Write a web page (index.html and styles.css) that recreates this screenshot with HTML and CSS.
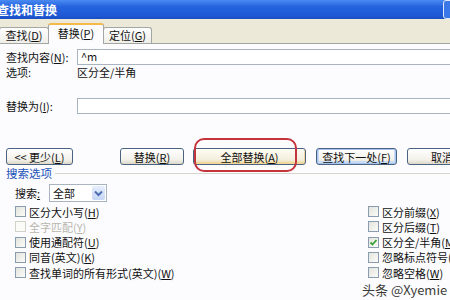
FILE: index.html
```html
<!DOCTYPE html>
<html lang="zh-CN">
<head>
  <meta charset="UTF-8">
  <meta name="viewport" content="width=device-width, initial-scale=1.0">
  <title>查找和替换</title>
  <link rel="stylesheet" href="styles.css">
</head>
<body>
  <div class="dialog">
    <div class="titlebar">
      <span class="title">查找和替换</span>
      <span class="tb-btn"></span>
    </div>

    <div class="tabs">
      <div class="tab first">查找(<u>D</u>)</div>
      <div class="tab active">替换(<u>P</u>)</div>
      <div class="tab">定位(<u>G</u>)</div>
    </div>

    <div class="panel">
      <div class="field">
        <span class="label">查找内容(<u>N</u>):</span>
        <div class="input">^m</div>
      </div>
      <div class="field option">
        <span class="label">选项:</span>
        <span>区分全/半角</span>
      </div>
      <div class="field replace">
        <span class="label">替换为(<u>I</u>):</span>
        <div class="input"></div>
      </div>

      <div class="actions">
        <button class="btn more">&lt;&lt; 更少(<u>L</u>)</button>
        <button class="btn one">替换(<u>R</u>)</button>
        <div class="all-wrap">
          <button class="btn all">全部替换(<u>A</u>)</button>
          <span class="mark"></span>
        </div>
        <button class="btn next">查找下一处(<u>F</u>)</button>
        <button class="btn cancel">取消</button>
      </div>

      <div class="group-title"><span>搜索选项</span></div>

      <div class="search-row">
        <span class="search-label">搜索<u>:</u></span>
        <div class="select">
          <span>全部</span>
          <span class="arrow">
            <svg width="9" height="7" viewBox="0 0 9 7"><path d="M1 1.5 L4.5 5 L8 1.5" fill="none" stroke="#4d6fb0" stroke-width="2"/></svg>
          </span>
        </div>
      </div>

      <div class="checks">
        <label class="check"><span class="box"></span>区分大小写(<u>H</u>)</label>
        <label class="check disabled"><span class="box"></span>全字匹配(<u>Y</u>)</label>
        <label class="check"><span class="box"></span>使用通配符(<u>U</u>)</label>
        <label class="check"><span class="box"></span>同音(英文)(<u>K</u>)</label>
        <label class="check"><span class="box"></span>查找单词的所有形式(英文)(<u>W</u>)</label>
        <label class="check"><span class="box"></span>区分前缀(<u>X</u>)</label>
        <label class="check"><span class="box"></span>区分后缀(<u>T</u>)</label>
        <label class="check"><span class="box checked">
          <svg width="9" height="9" viewBox="0 0 9 9"><path d="M1.5 4.5 L3.5 6.5 L7.5 2" fill="none" stroke="#3aa13a" stroke-width="1.8"/></svg>
        </span>区分全/半角(<u>M</u>)</label>
        <label class="check"><span class="box"></span>忽略标点符号(<u>S</u>)</label>
        <label class="check"><span class="box"></span>忽略空格(<u>W</u>)</label>
      </div>
    </div>

    <div class="watermark">头条 @Xyemie</div>
  </div>
</body>
</html>
```

FILE: styles.css
```css
body {
  margin: 0;
  width: 450px;
  height: 300px;
  overflow: hidden;
  font-family: "Noto Sans CJK SC", "Liberation Sans", sans-serif;
  font-size: 11px;
  color: #111;
}

u {
  text-decoration: underline;
}

.dialog {
  position: relative;
  width: 450px;
  height: 300px;
  background-color: #fcfcfe;
}

/* title bar */
.titlebar {
  display: flex;
  align-items: center;
  height: 19px;
  background: linear-gradient(#4a8af2, #2563de 35%, #1f5ad6 80%, #1a4fc4);
}

.title {
  text-indent: -3px;
  color: #fff;
  font-size: 12px;
  font-weight: bold;
  line-height: 16px;
}

.tb-btn {
  margin-left: auto;
  margin-right: -12px;
  width: 17px;
  height: 17px;
  border: 1px solid #dfe8fa;
  border-radius: 3px;
  background-color: #3a78ea;
}

/* tabs */
.tabs {
  display: flex;
  align-items: flex-end;
  height: 24px;
  background-color: #ece9d8;
  border-bottom: 1px solid #a3a7a3;
}

.tab {
  box-sizing: border-box;
  height: 16px;
  border: 1px solid #a3a7a3;
  border-bottom: none;
  border-radius: 3px 3px 0 0;
  background: linear-gradient(#fefefe, #efeee8);
  text-align: center;
  line-height: 15px;
  font-size: 11px;
}

.tab.first {
  width: 50px;
  margin-left: -1px;
}

.tab.active {
  width: 56px;
  height: 21px;
  margin-bottom: -1px;
  margin-left: -1px;
  margin-right: -1px;
  border-top: 2px solid #f5b94a;
  background-color: #fcfcfe;
  background-image: none;
  line-height: 17px;
  position: relative;
}

.tab:last-child {
  width: 49px;
}

/* panel */
.panel {
  padding: 5px 0 0 6px;
}

.field {
  display: flex;
  align-items: center;
  height: 16px;
}

.label {
  width: 71px;
  flex-shrink: 0;
}

.input {
  box-sizing: border-box;
  width: 420px;
  height: 16px;
  flex-shrink: 0;
  padding-left: 3px;
  border: 1px solid #a8b4c0;
  background-color: #fff;
  line-height: 13px;
}

.field.option {
  height: 14px;
  margin-top: 0;
}

.field.replace {
  margin-top: 19px;
}

/* buttons */
.actions {
  display: flex;
  align-items: center;
  height: 17px;
  margin-top: 34px;
}

.btn {
  box-sizing: border-box;
  height: 17px;
  flex-shrink: 0;
  padding: 0;
  border: 1px solid #4a6382;
  border-radius: 3px;
  background: linear-gradient(#ffffff, #f3f1ea 70%, #dcd8c8);
  font-family: inherit;
  font-size: 11px;
  color: #111;
  line-height: 14px;
}

.more {
  width: 67px;
}

.one {
  width: 64px;
  margin-left: 47px;
}

.all-wrap {
  position: relative;
  margin-left: 9px;
}

.all {
  width: 113px;
  background: linear-gradient(#fffdf4, #f4efdc 70%, #e7d9a8);
  box-shadow: inset 0 -1px 0 1px #f3d79a;
}

.mark {
  position: absolute;
  left: 1px;
  top: -10px;
  width: 103px;
  height: 34px;
  box-sizing: border-box;
  border: 2px solid #c4343d;
  border-radius: 10px;
}

.next {
  width: 81px;
  margin-left: 10px;
  box-shadow: inset 0 0 0 1px #a6c4ee, inset 0 -1px 0 2px #c9dcf6;
}

.cancel {
  width: 70px;
  margin-left: 10px;
}

/* search options */
.group-title {
  display: flex;
  align-items: center;
  height: 14px;
  margin-top: 1px;
  color: #2252b8;
  font-size: 11.5px;
}

.group-title::after {
  content: "";
  flex-grow: 1;
  height: 1px;
  margin-left: 3px;
  background-color: #d6d6cc;
}

.search-row {
  display: flex;
  align-items: center;
  height: 18px;
  margin-top: 4px;
  padding-left: 9px;
}

.search-label {
  width: 34px;
}

.select {
  box-sizing: border-box;
  display: flex;
  align-items: center;
  width: 58px;
  height: 18px;
  padding: 1px 1px 1px 3px;
  border: 1px solid #a8b4c0;
  background-color: #fff;
}

.select span:first-child {
  flex-grow: 1;
}

.arrow {
  display: flex;
  align-items: center;
  justify-content: center;
  width: 13px;
  height: 14px;
  border-radius: 2px;
  background: linear-gradient(#e6eefc, #c6d6f6);
}

.checks {
  display: grid;
  grid-template-columns: 353px auto;
  grid-template-rows: repeat(5, 15.25px);
  grid-auto-flow: column;
  margin-top: 2px;
  padding-left: 9px;
}

.check {
  display: flex;
  align-items: center;
  white-space: nowrap;
}

.box {
  box-sizing: border-box;
  display: flex;
  align-items: center;
  justify-content: center;
  width: 11px;
  height: 11px;
  margin-right: 3px;
  border: 1px solid #8a9cb0;
  background: linear-gradient(135deg, #e4e4de, #fbfbf8);
}

.check.disabled {
  color: #b8b6ad;
}

.check.disabled .box {
  border-color: #d4d2c8;
  background: #fbfbf8;
}

.watermark {
  position: absolute;
  left: 362px;
  top: 280px;
  font-size: 13px;
  color: #3a3a3a;
  text-shadow: 0 0 2px #fff, 0 0 2px #fff;
}
```
